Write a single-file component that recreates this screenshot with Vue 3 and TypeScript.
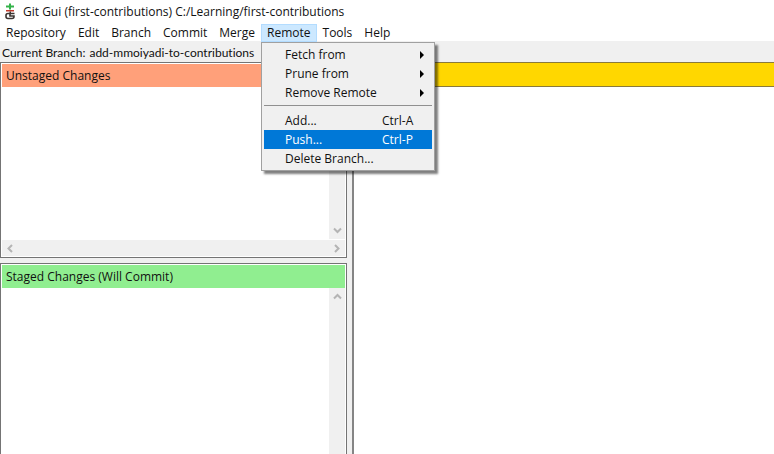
<script setup lang="ts">
import { ref } from 'vue'

interface Entry {
  label: string
  shortcut?: string
  submenu?: boolean
  selected?: boolean
}

const menus: string[] = ['Repository', 'Edit', 'Branch', 'Commit', 'Merge', 'Remote', 'Tools', 'Help']
const openMenu = ref('Remote')

const groups: Entry[][] = [
  [
    { label: 'Fetch from', submenu: true },
    { label: 'Prune from', submenu: true },
    { label: 'Remove Remote', submenu: true },
  ],
  [
    { label: 'Add...', shortcut: 'Ctrl-A' },
    { label: 'Push...', shortcut: 'Ctrl-P', selected: true },
    { label: 'Delete Branch...' },
  ],
]

const chevrons = {
  up: 'M1 6.500 L4.500 3 L8 6.500',
  down: 'M1 2.500 L4.500 6 L8 2.500',
  left: 'M6 1 L2.500 4.500 L6 8',
  right: 'M3 1 L6.500 4.500 L3 8',
}
</script>

<template>
  <div class="window">
    <header class="titlebar">
      <svg class="logo" viewBox="0 0 12 18" aria-hidden="true">
        <path d="M5 0.500h2v2h3v2H7v2H5v-2H2v-2h3z" fill="#34b34a" />
        <path d="M2 7h8v1.500H2z" fill="#c0392b" />
        <path d="M5.500 8.500h1.500v2H5.500z" fill="#3b3431" />
        <path d="M10.500 10.500H4Q2 10.500 2 12.500V13.500Q2 15.500 4 15.500H8Q10 15.500 10 13.500V13H6V11" fill="none" stroke="#3b3431" stroke-width="1.600" />
      </svg>
      <span>Git Gui (first-contributions) C:/Learning/first-contributions</span>
    </header>

    <nav class="menubar">
      <div v-for="name in menus" :key="name" class="menu">
        <button
          type="button"
          class="menu-button"
          :class="{ open: openMenu === name }"
          @click="openMenu = openMenu === name ? '' : name"
        >{{ name }}</button>
        <div v-if="name === 'Remote' && openMenu === name" class="dropdown">
          <div v-for="(group, g) in groups" :key="g" class="group">
            <button
              v-for="entry in group"
              :key="entry.label"
              type="button"
              class="entry"
              :class="{ selected: entry.selected }"
            >
              <span class="entry-label">{{ entry.label }}</span>
              <span v-if="entry.shortcut" class="shortcut">{{ entry.shortcut }}</span>
              <svg v-if="entry.submenu" class="arrow" viewBox="0 0 4 8" aria-hidden="true">
                <path d="M0 0 L4 4 L0 8z" fill="#000" />
              </svg>
            </button>
          </div>
        </div>
      </div>
    </nav>

    <div class="branchbar">
      <span>Current Branch:</span>
      <span>add-mmoiyadi-to-contributions</span>
    </div>

    <main class="content">
      <div class="lists">
        <section class="panel unstaged">
          <h2 class="heading">Unstaged Changes</h2>
          <div class="body">
            <div class="files"></div>
            <div class="vscroll">
              <svg class="chevron" viewBox="0 0 9 9" aria-hidden="true"><path :d="chevrons.up" /></svg>
              <svg class="chevron" viewBox="0 0 9 9" aria-hidden="true"><path :d="chevrons.down" /></svg>
            </div>
          </div>
          <div class="hscroll">
            <svg class="chevron" viewBox="0 0 9 9" aria-hidden="true"><path :d="chevrons.left" /></svg>
            <svg class="chevron" viewBox="0 0 9 9" aria-hidden="true"><path :d="chevrons.right" /></svg>
          </div>
        </section>
        <section class="panel staged">
          <h2 class="heading">Staged Changes (Will Commit)</h2>
          <div class="body">
            <div class="files"></div>
            <div class="vscroll">
              <svg class="chevron" viewBox="0 0 9 9" aria-hidden="true"><path :d="chevrons.up" /></svg>
            </div>
          </div>
        </section>
      </div>
      <section class="diff">
        <div class="diff-heading"></div>
      </section>
    </main>
  </div>
</template>

<style>
body {
  margin: 0;
}
</style>

<style scoped>
.window {
  display: flex;
  flex-direction: column;
  height: 100vh;
  overflow: hidden;
  background: #fff;
  color: #111;
  font: 12px/16px "Open Sans", "Noto Sans", sans-serif;
}
.titlebar {
  display: flex;
  align-items: center;
  gap: 7px;
  height: 24px;
  padding-left: 4px;
}
.logo {
  width: 12px;
  height: 18px;
}
.menubar {
  display: flex;
  height: 17px;
}
.menu {
  position: relative;
}
.menu-button {
  height: 18px;
  padding: 0 5px;
  border: 1px solid transparent;
  background: none;
  color: inherit;
  font: inherit;
}
.menu-button.open {
  border-color: #b3dcff;
  background: #cce8ff;
}
.dropdown {
  position: absolute;
  z-index: 1;
  top: 18px;
  left: 0;
  box-sizing: border-box;
  width: 174px;
  padding: 2px;
  border: 1px solid #a0a0a0;
  background: #f0f0f0;
  box-shadow: 3px 3px 2px rgba(0, 0, 0, 0.5);
}
.group + .group {
  margin-top: 3px;
  padding-top: 5px;
  border-top: 1px solid #909090;
}
.entry {
  display: flex;
  align-items: center;
  width: 100%;
  height: 19px;
  padding: 0 8px 0 21px;
  border: 0;
  background: none;
  color: inherit;
  font: inherit;
  text-align: left;
}
.entry.selected {
  background: #0078d7;
  color: #fff;
}
.entry-label {
  flex: 1;
}
.shortcut {
  width: 42px;
}
.arrow {
  width: 4px;
  height: 8px;
}
.branchbar {
  display: flex;
  align-items: flex-end;
  box-sizing: border-box;
  gap: 4px;
  height: 21px;
  padding: 0 0 1px 2px;
  background: #f0f0f0;
  font-family: Lato, "Open Sans", sans-serif;
  font-variant-ligatures: none;
}
.content {
  display: flex;
  flex: 1;
  min-height: 0;
  background: #f0f0f0;
}
.lists {
  display: flex;
  flex: 0 0 347px;
  flex-direction: column;
  gap: 5px;
  margin-right: 5px;
}
.panel {
  display: flex;
  flex-direction: column;
  box-sizing: border-box;
  padding: 1px;
  border: 1px solid #747474;
  background: #fff;
}
.unstaged {
  flex: 0 0 50%;
}
.staged {
  flex: 1;
  padding-bottom: 0;
  border-bottom: 0;
}
.heading {
  margin: 0;
  padding: 4px 4px 3px;
  background: #ffa07a;
  font: inherit;
}
.staged .heading {
  background: #90ee90;
}
.body {
  display: flex;
  flex: 1;
}
.files {
  flex: 1;
}
.vscroll,
.hscroll {
  display: flex;
  justify-content: space-between;
  align-items: center;
  background: #f0f0f0;
}
.vscroll {
  flex-direction: column;
  width: 16px;
  padding: 4px 0;
}
.hscroll {
  height: 16px;
  padding: 0 4px;
  border-top: 1px solid #fff;
}
.chevron {
  width: 9px;
  height: 9px;
  fill: none;
  stroke: #b4b4b4;
  stroke-width: 2;
}
.diff {
  flex: 1;
  border-left: 2px solid #858585;
  background: #fff;
}
.diff-heading {
  height: 23px;
  border: solid #8a7a3a;
  border-width: 1px 0;
  background: #ffd700;
}
</style>
